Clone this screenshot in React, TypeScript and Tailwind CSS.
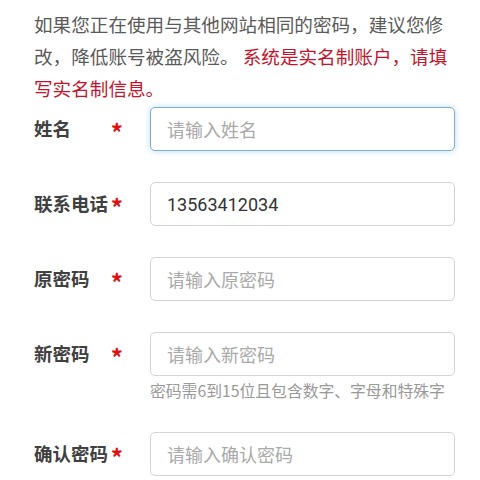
const FONT = { fontFamily: '"Noto Sans CJK SC", "Noto Sans", sans-serif' }

const FIELDS = [
  { label: '姓名', placeholder: '请输入姓名', focused: true },
  { label: '联系电话', value: '13563412034' },
  { label: '原密码', placeholder: '请输入原密码' },
  { label: '新密码', placeholder: '请输入新密码', hint: '密码需6到15位且包含数字、字母和特殊字' },
  { label: '确认密码', placeholder: '请输入确认密码' },
]

export default function App() {
  return (
    <div className="h-[480px] w-[480px] overflow-hidden bg-white pl-[34px] pr-[25px] pt-[8px]" style={FONT}>
      <p className="text-[18.6px] leading-[32px] text-[#5a5a5a]">
        如果您正在使用与其他网站相同的密码，建议您修改，降低账号被盗风险。{' '}
        <span className="text-[#c3122b]">系统是实名制账户，请填写实名制信息。</span>
      </p>

      <div className="mt-[3px] flex flex-col">
        {FIELDS.map((f) => (
          <div key={f.label} className="mb-[31px] flex flex-col">
            <div className="flex items-center">
              <div className="flex w-[89px] items-center justify-between">
                <span className="text-[18.5px] font-bold text-[#404040]">{f.label}</span>
                <span className="pt-[6px] text-[24px] font-bold leading-none text-[#e01010]">*</span>
              </div>
              <div
                className={
                  'ml-[27px] flex h-[44px] flex-1 items-center rounded-[5px] border bg-white pl-[16px] text-[18px] ' +
                  (f.focused
                    ? 'border-[#7eaecf] shadow-[0_0_6px_rgba(102,175,233,0.45)]'
                    : 'border-[#d4d4d4]')
                }
              >
                {f.value ? (
                  <span className="font-['Roboto'] text-[18px] text-[#333]">{f.value}</span>
                ) : (
                  <span className="text-[#a9a9a9]">{f.placeholder}</span>
                )}
              </div>
            </div>
            {f.hint && (
              <div className="ml-[116px] mt-[5px] whitespace-nowrap text-[15.8px] leading-[20px] text-[#999]">{f.hint}</div>
            )}
          </div>
        ))}
      </div>
    </div>
  )
}
